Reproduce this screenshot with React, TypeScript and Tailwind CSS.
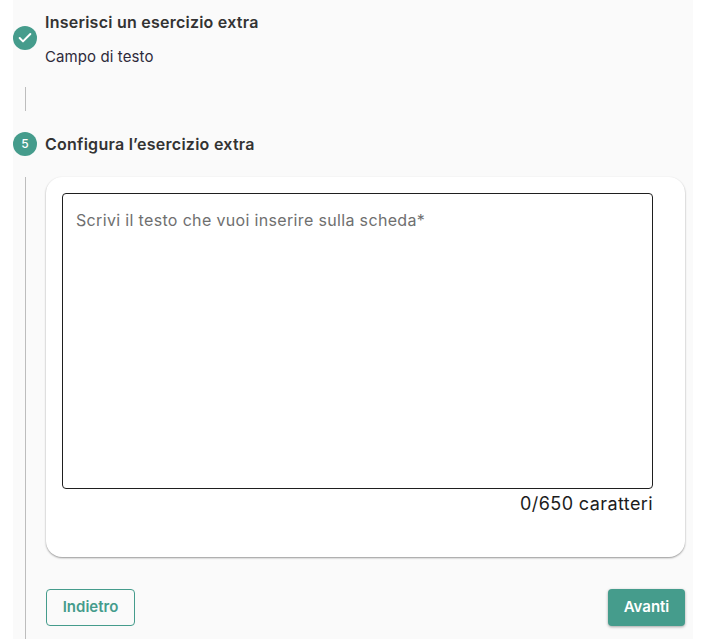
import { Check } from "lucide-react";

const font = { fontFamily: "Inter, sans-serif" };

export default function App() {
  return (
    <div className="h-[639px] w-[705px] overflow-hidden bg-white" style={font}>
      <div className="ml-[13px] h-full w-[680px] bg-[#fafafa] pr-2">
        {/* Step 4 - completato */}
        <div className="flex h-[87px] gap-2">
          <div className="mt-[26px] flex h-6 w-6 shrink-0 items-center justify-center rounded-full bg-[#459c8c] text-white">
            <Check size={16} strokeWidth={3} />
          </div>
          <div className="pt-3">
            <h3 className="h-5 text-[16px] leading-5 font-semibold tracking-[0.24px] text-[#333333]">
              Inserisci un esercizio extra
            </h3>
            <p className="mt-[15px] text-[15px] leading-5 tracking-[0.1px] text-[#2e2a3a]">Campo di testo</p>
          </div>
        </div>
        <div className="ml-3 h-6 w-px bg-[#bdbdbd]" />

        {/* Step 5 */}
        <div className="mt-[21px] flex h-6 items-center gap-2">
          <div className="flex h-6 w-6 shrink-0 items-center justify-center rounded-full bg-[#459c8c] text-[12px] font-medium text-white">
            5
          </div>
          <h3 className="text-[16px] font-semibold tracking-[0.26px] text-[#333333]">Configura l’esercizio extra</h3>
        </div>

        <div className="mt-[21px] ml-3 border-l border-[#bdbdbd] pb-10 pl-5">
          <div className="h-[380px] rounded-2xl bg-white pt-4 pr-8 pl-4 shadow-[0_1px_2px_rgba(0,0,0,0.4)]">
            <div className="h-[296px] rounded border border-[#1f1f1f] px-[13px] pt-[15px]">
              <p className="text-[16px] leading-[22px] tracking-[0.34px] text-[#6f6f6f]">
                Scrivi il testo che vuoi inserire sulla scheda*
              </p>
            </div>
            <p className="mt-1 text-right text-[18px] leading-[22px] tracking-[0.4px] text-[#1c1c1c]">0/650 caratteri</p>
          </div>

          <div className="mt-8 flex items-center justify-between">
            <button className="flex h-[37px] w-[89px] items-center justify-center rounded border border-[#459c8c] text-[15px] font-semibold text-[#459c8c]">
              Indietro
            </button>
            <button className="flex h-[37px] w-[77px] items-center justify-center rounded bg-[#459c8c] text-[15px] font-semibold text-white shadow-[0_1px_3px_rgba(0,0,0,0.35)]">
              Avanti
            </button>
          </div>
        </div>
      </div>
    </div>
  );
}
